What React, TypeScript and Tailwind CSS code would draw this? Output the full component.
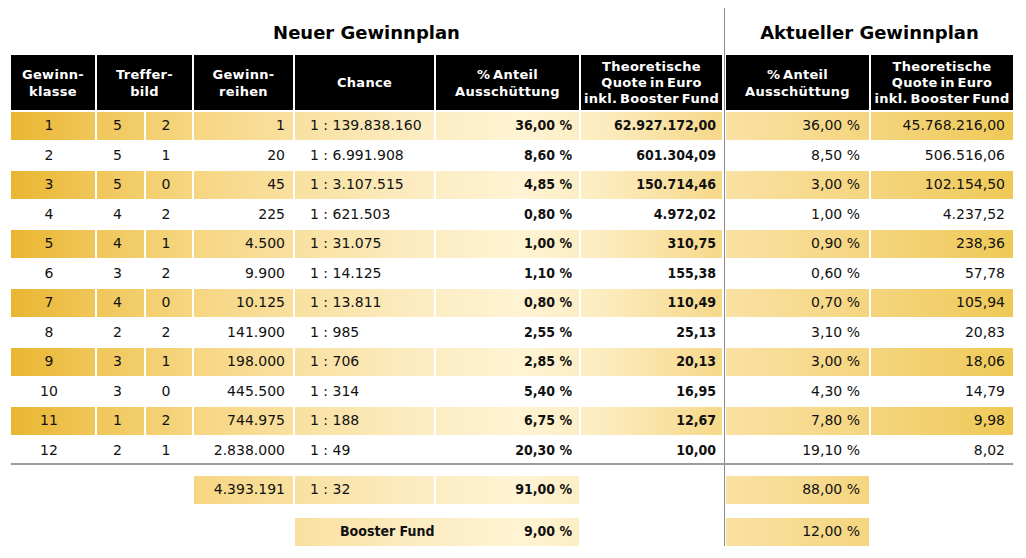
const gold =
  "bg-fixed bg-[linear-gradient(to_right,#e9b631_11px,#f0c659_95px,#f5d47c_180px,#f9e09f_290px,#fcecc2_420px,#fef3d3_520px,#fcecc0_600px,#f6d889_722px,#f9e1a3_726px,#f4d47c_880px,#efc957_1013px)]";

const leftCols = "grid grid-cols-[84px_47px_46px_99px_139px_143px_141px] gap-x-[2px]";
const rightCols = "grid grid-cols-[143px_142px] gap-x-[2px]";
const boldNum = "font-['DejaVu_Sans_Condensed','DejaVu_Sans',sans-serif] font-bold";

const rows = [
  ["1", "5", "2", "1", "1 : 139.838.160", "36,00 %", "62.927.172,00", "36,00 %", "45.768.216,00"],
  ["2", "5", "1", "20", "1 : 6.991.908", "8,60 %", "601.304,09", "8,50 %", "506.516,06"],
  ["3", "5", "0", "45", "1 : 3.107.515", "4,85 %", "150.714,46", "3,00 %", "102.154,50"],
  ["4", "4", "2", "225", "1 : 621.503", "0,80 %", "4.972,02", "1,00 %", "4.237,52"],
  ["5", "4", "1", "4.500", "1 : 31.075", "1,00 %", "310,75", "0,90 %", "238,36"],
  ["6", "3", "2", "9.900", "1 : 14.125", "1,10 %", "155,38", "0,60 %", "57,78"],
  ["7", "4", "0", "10.125", "1 : 13.811", "0,80 %", "110,49", "0,70 %", "105,94"],
  ["8", "2", "2", "141.900", "1 : 985", "2,55 %", "25,13", "3,10 %", "20,83"],
  ["9", "3", "1", "198.000", "1 : 706", "2,85 %", "20,13", "3,00 %", "18,06"],
  ["10", "3", "0", "445.500", "1 : 314", "5,40 %", "16,95", "4,30 %", "14,79"],
  ["11", "1", "2", "744.975", "1 : 188", "6,75 %", "12,67", "7,80 %", "9,98"],
  ["12", "2", "1", "2.838.000", "1 : 49", "20,30 %", "10,00", "19,10 %", "8,02"],
];

function Head({ lines, tight, className = "" }: { lines: string[]; tight?: boolean; className?: string }) {
  return (
    <div
      className={`bg-black text-white font-bold text-[13px] tracking-[0.3px] [word-spacing:-2px] flex flex-col items-center justify-center text-center ${
        tight ? "leading-[16px]" : "leading-[17px]"
      } ${className}`}
    >
      {lines.map((l) => (
        <span key={l} className="whitespace-nowrap">
          {l}
        </span>
      ))}
    </div>
  );
}

function App() {
  return (
    <div className="w-[1026px] h-[558px] bg-white flex pl-[11px] text-[#111] text-[14px] font-['DejaVu_Sans',sans-serif] overflow-hidden">
      {/* Neuer Gewinnplan */}
      <div className="w-[711px] flex flex-col">
        <div className="h-[55px] flex items-center justify-center pt-[9px] text-[18px] font-bold text-black">
          Neuer Gewinnplan
        </div>
        <div className={`${leftCols} h-[55px]`}>
          <Head lines={["Gewinn-", "klasse"]} />
          <Head lines={["Treffer-", "bild"]} className="col-span-2" />
          <Head lines={["Gewinn-", "reihen"]} />
          <Head lines={["Chance"]} />
          <Head lines={["% Anteil", "Ausschüttung"]} />
          <Head lines={["Theoretische", "Quote in Euro", "inkl. Booster Fund"]} tight />
        </div>
        <div className="mt-[2px] flex flex-col gap-[2px]">
          {rows.map((r, i) => {
            const bg = i % 2 === 0 ? gold : "";
            return (
              <div key={r[0]} className={`${leftCols} h-[27.5px]`}>
                <div className={`${bg} flex items-center justify-center pr-[8px]`}>{r[0]}</div>
                <div className={`${bg} flex items-center justify-center pr-[6px]`}>{r[1]}</div>
                <div className={`${bg} flex items-center justify-center pr-[6px]`}>{r[2]}</div>
                <div className={`${bg} flex items-center justify-end pr-[8px]`}>{r[3]}</div>
                <div className={`${bg} flex items-center pl-[15px]`}>{r[4]}</div>
                <div className={`${bg} ${boldNum} flex items-center justify-end pr-[7px]`}>{r[5]}</div>
                <div className={`${bg} ${boldNum} flex items-center justify-end pr-[6px]`}>{r[6]}</div>
              </div>
            );
          })}
        </div>
        <div className="mt-[-1px] h-[2px] w-[713px] bg-[#9c9c9c]" />
        <div className={`${leftCols} h-[27.5px] mt-[11px]`}>
          <div className="col-span-3" />
          <div className={`${gold} flex items-center justify-end pr-[8px]`}>4.393.191</div>
          <div className={`${gold} flex items-center pl-[15px]`}>1 : 32</div>
          <div className={`${gold} ${boldNum} flex items-center justify-end pr-[7px]`}>91,00 %</div>
        </div>
        <div className={`${leftCols} h-[28.5px] mt-[14px]`}>
          <div className="col-span-4" />
          <div className={`${gold} ${boldNum} col-span-2 flex items-center justify-between pl-[45px] pr-[7px]`}>
            <span>Booster Fund</span>
            <span>9,00 %</span>
          </div>
        </div>
      </div>

      {/* divider */}
      <div className="ml-[2px] mt-[8px] h-[538px] w-[1px] bg-[#8c8c8c]" />

      {/* Aktueller Gewinnplan */}
      <div className="ml-[1px] w-[287px] flex flex-col">
        <div className="h-[55px] flex items-center justify-center pt-[9px] text-[18px] font-bold text-black">
          Aktueller Gewinnplan
        </div>
        <div className={`${rightCols} h-[55px]`}>
          <Head lines={["% Anteil", "Ausschüttung"]} />
          <Head lines={["Theoretische", "Quote in Euro", "inkl. Booster Fund"]} tight />
        </div>
        <div className="mt-[2px] flex flex-col gap-[2px]">
          {rows.map((r, i) => {
            const bg = i % 2 === 0 ? gold : "";
            return (
              <div key={r[0]} className={`${rightCols} h-[27.5px]`}>
                <div className={`${bg} flex items-center justify-end pr-[9px]`}>{r[7]}</div>
                <div className={`${bg} flex items-center justify-end pr-[8px]`}>{r[8]}</div>
              </div>
            );
          })}
        </div>
        <div className="mt-[-1px] ml-[-3px] h-[2px] w-[290px] bg-[#9c9c9c]" />
        <div className={`${rightCols} h-[27.5px] mt-[11px]`}>
          <div className={`${gold} flex items-center justify-end pr-[9px]`}>88,00 %</div>
        </div>
        <div className={`${rightCols} h-[28.5px] mt-[14px]`}>
          <div className={`${gold} flex items-center justify-end pr-[9px]`}>12,00 %</div>
        </div>
      </div>
    </div>
  );
}

export default App;
